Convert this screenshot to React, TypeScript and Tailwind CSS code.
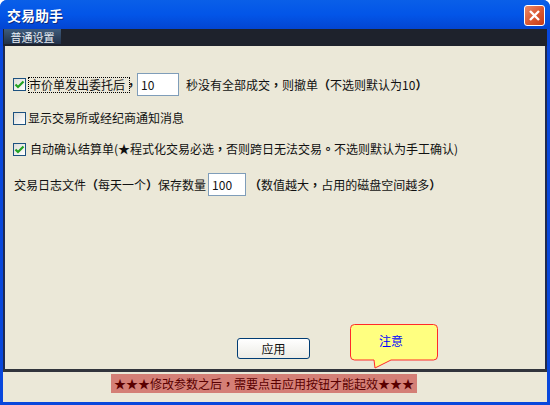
import React from "react";

const P = ({ children }: { children: React.ReactNode }) => (
  <span className="font-['Noto_Sans_CJK_TC'] font-bold">{children}</span>
);

const Check = ({ on }: { on?: boolean }) => (
  <span className="flex h-[13px] w-[13px] shrink-0 items-center justify-center border border-[#1c5180] bg-gradient-to-br from-[#dcdcd7] to-white">
    {on && (
      <svg width="11" height="11" viewBox="0 0 11 11">
        <path d="M1.5 5.5 L4 8 L9.5 2.5" fill="none" stroke="#21a121" strokeWidth="2.2" />
      </svg>
    )}
  </span>
);

const Field = ({ value, className }: { value: string; className: string }) => (
  <span className={`flex h-[23px] items-center border border-[#7f9db9] bg-white pl-[3px] text-[12px] ${className}`}>{value}</span>
);

export default function App() {
  return (
    <div className="flex h-[405px] w-[550px] flex-col overflow-hidden rounded-t-[7px] bg-[#0847dc] font-['Noto_Sans_CJK_SC','Noto_Sans_CJK_TC',sans-serif] text-[12px] leading-[14px] text-[#111]">
      <div className="flex h-[29px] shrink-0 items-center justify-between bg-gradient-to-b from-[#0a5fe8] via-[#0355e8] to-[#0345d2] pl-[7px] pr-[5px] pt-[1px]">
        <span className="text-[14px] font-bold text-white [text-shadow:1px_1px_0_#0a2a80]">交易助手</span>
        <span className="flex h-[21px] w-[21px] items-center justify-center rounded-[3px] border border-white bg-gradient-to-br from-[#e88a68] via-[#db5a34] to-[#c63a14]">
          <svg width="13" height="13" viewBox="0 0 13 13">
            <path d="M2 2 L11 11 M11 2 L2 11" stroke="white" strokeWidth="2.4" />
          </svg>
        </span>
      </div>
      <div className="flex min-h-0 flex-1 flex-col pl-[3px] pr-[3px] pb-[3px]">
        <div className="flex h-[17px] shrink-0 bg-[#1e222c] pl-px">
          <span className="flex h-[15px] w-[57px] items-center justify-center bg-gradient-to-b from-[#3f5c7c] to-[#22324a] text-[11px] text-[#e8eef4]">普通设置</span>
        </div>
        <div className="relative flex min-h-0 flex-1 flex-col border-x-[2px] border-[#1e2a50] bg-[#ebe8d8] pl-[8px] pt-[27px]">
          <div className="flex h-[23px] items-center">
            <Check on />
            <span className="ml-[2px] flex h-[16px] w-[102px] items-center border border-dotted border-black whitespace-nowrap">市价单发出委托后<P>，</P></span>
            <Field value="10" className="ml-[7px] w-[42px]" />
            <span className="ml-[7px] whitespace-nowrap">秒没有全部成交<P>，</P>则撤单<P>（</P>不选则默认为10<P>）</P></span>
          </div>
          <div className="mt-[15px] flex h-[14px] items-center">
            <Check />
            <span className="ml-[2px] whitespace-nowrap">显示交易所或经纪商通知消息</span>
          </div>
          <div className="mt-[17px] flex h-[14px] items-center">
            <Check on />
            <span className="ml-[4px] whitespace-nowrap">自动确认结算单(★程式化交易必选<P>，</P>否则跨日无法交易<P>。</P>不选则默认为手工确认)</span>
          </div>
          <div className="mt-[17px] flex h-[23px] items-center pl-px">
            <span className="whitespace-nowrap">交易日志文件<P>（</P>每天一个<P>）</P>保存数量</span>
            <Field value="100" className="ml-[2px] w-[38px]" />
            <span className="ml-[3px] whitespace-nowrap"><P>（</P>数值越大<P>，</P>占用的磁盘空间越多<P>）</P></span>
          </div>
          <div className="mt-auto flex h-[31px] shrink-0 items-start pl-[224px]">
            <span className="flex h-[21px] w-[73px] items-center justify-center rounded-[3px] border border-[#003c74] bg-gradient-to-b from-white to-[#ecebe5]">应用</span>
          </div>
          <div className="absolute left-[345px] top-[278px] h-[45px] w-[88px]">
            <svg className="absolute inset-0" width="88" height="45" viewBox="0 0 88 45">
              <path d="M4.5 .5 H83.5 a4 4 0 0 1 4 4 V32 a4 4 0 0 1 -4 4 H41 L25 44 L24 36 H4.5 a4 4 0 0 1 -4 -4 V4.5 a4 4 0 0 1 4 -4 Z" fill="#ffff80" stroke="#ff2a2a" />
            </svg>
            <span className="absolute left-0 top-[10px] w-[82px] text-center text-[#0000ff]">注意</span>
          </div>
        </div>
        <div className="h-[3px] shrink-0 bg-[#31343c]" />
        <div className="flex h-[30px] shrink-0 items-start justify-start bg-[#ebe8d8] pl-[108px] pt-[2px]">
          <span className="flex h-[19px] w-[306px] items-center justify-center whitespace-nowrap bg-[#d47f76] text-[#5a0000]">★★★修改参数之后<P>，</P>需要点击应用按钮才能起效★★★</span>
        </div>
      </div>
    </div>
  );
}
